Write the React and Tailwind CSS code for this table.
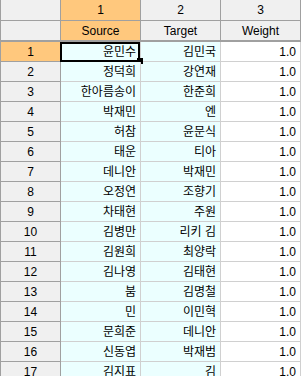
import React from 'react';

const rows = [
  ['윤민수', '김민국'],
  ['정덕희', '강연재'],
  ['한아름송이', '한준희'],
  ['박재민', '엔'],
  ['허참', '윤문식'],
  ['태운', '티아'],
  ['데니안', '박재민'],
  ['오정연', '조향기'],
  ['차태현', '주원'],
  ['김병만', '리키 김'],
  ['김원희', '최양락'],
  ['김나영', '김태현'],
  ['붐', '김명철'],
  ['민', '이민혁'],
  ['문희준', '데니안'],
  ['신동엽', '박재범'],
  ['김지표', '김'],
];

const font = { fontFamily: '"Liberation Sans", "Noto Sans CJK KR", sans-serif' };

function HeadCell({ children, active }) {
  return (
    <div
      className={`w-[80px] shrink-0 border-r border-[#a0a0a0] flex items-center justify-center ${
        active ? 'bg-[#ffc87d]' : 'bg-[#f0f0f0]'
      }`}
    >
      {children}
    </div>
  );
}

export default function App() {
  return (
    <div className="w-[302px] h-[376px] overflow-hidden bg-white text-[12px] text-black leading-none" style={font}>
      <div className="w-[301px] border-l border-[#a0a0a0]">
        <div className="flex h-[21px] border-b border-[#a0a0a0]">
          <div className="w-[60px] shrink-0 bg-[#f0f0f0] border-r border-[#a0a0a0]" />
          <HeadCell active>1</HeadCell>
          <HeadCell>2</HeadCell>
          <HeadCell>3</HeadCell>
        </div>
        <div className="flex h-[21px] border-b-2 border-[#a0a0a0]">
          <div className="w-[60px] shrink-0 bg-[#f0f0f0] border-r border-[#a0a0a0]" />
          <HeadCell active>Source</HeadCell>
          <HeadCell>Target</HeadCell>
          <HeadCell>Weight</HeadCell>
        </div>
        {rows.map(([src, tgt], i) => (
          <div key={i} className="flex h-[20px]">
            <div
              className={`w-[60px] shrink-0 border-r border-b border-[#a0a0a0] flex items-center justify-center ${
                i === 0 ? 'bg-[#ffc87d]' : 'bg-[#f0f0f0]'
              }`}
            >
              {i + 1}
            </div>
            <div className="relative w-[80px] shrink-0 bg-[#ebffff] border-r border-b border-[#d0d0d0] flex items-center justify-end pr-[4px]">
              {src}
              {i === 0 && (
                <>
                  <div className="absolute left-[-1px] top-0 w-[80px] h-[20px] border-2 border-black" />
                  <div className="absolute left-[76px] top-[16px] w-[6px] h-[6px] bg-black" />
                </>
              )}
            </div>
            <div className="w-[80px] shrink-0 bg-[#ebffff] border-r border-b border-[#d0d0d0] flex items-center justify-end pr-[4px]">
              {tgt}
            </div>
            <div className="w-[80px] shrink-0 bg-white border-r border-b border-[#d0d0d0] flex items-center justify-end pr-[4px]">
              1.0
            </div>
          </div>
        ))}
      </div>
    </div>
  );
}
